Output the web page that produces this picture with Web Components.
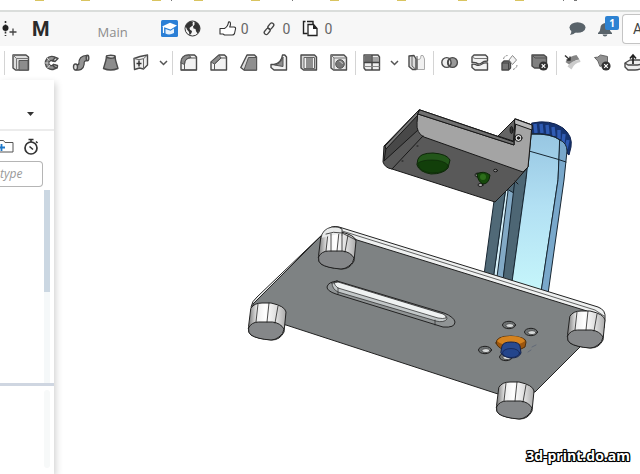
<!DOCTYPE html>
<html lang="en">
<head>
<meta charset="utf-8">
<title>Main – part studio</title>
<style>
html,body{height:100%;margin:0}
body{font-family:"Open Sans","Noto Sans",sans-serif;color:#333;background:#fff;overflow:hidden}
</style>
</head>
<body>
<cad-app></cad-app>
<script>
const define = (name, html, init) => customElements.define(name, class extends HTMLElement {
  constructor() {
    super();
    this.attachShadow({mode: "open"});
    const t = document.createElement("template");
    t.innerHTML = html;
    this.shadowRoot.append(t.content.cloneNode(true));
  }
  connectedCallback() { if (init) init(this, this.shadowRoot); }
});

const D = 'stroke="#4a4a4a" stroke-width="1.4" stroke-linejoin="round"';
const icons = {
  slider: '<path d="M5.500 1v15" stroke="#333" stroke-dasharray="2 1.500" stroke-width="1.600"/><circle cx="5.500" cy="8" r="3" fill="#222"/><path d="M9.500 12h7M13 8.500v7" stroke="#444" stroke-width="1.300"/>',
  edu: '<rect width="17" height="17" rx="1.500" fill="#2b7fd6"/><path d="M1 6.500l8-3.700L16 5.500 9.500 9.500z" fill="#fff"/><path d="M4.500 9v4.500q4 2 8.500-.5V8.500L9.500 10.800z" fill="#e6f1fc"/><path d="M2.500 7v6" stroke="#fff" stroke-width="1.200"/>',
  globe: '<circle cx="8.500" cy="8.500" r="7.500" fill="#f4f4f4" stroke="#333" stroke-width="1"/><path d="M1.500 6L3 3.500 6 1.600l3 .2-.5 2 .5 1.500-2 1.500L5.500 8 6 9.700l2 1.300-.5 2-2 2.500L5 12 3 9.500zM10.500 1.500l3.500 1.800 2 4-.5 3.500-2 2.700-1.500-2.200-.5-2.300-2-.5L9 6.500l1.500-1.800z" fill="#333"/>',
  thumb: '<path d="M1 8.500h4.500C8 7 9.300 5 9.500 2c2-.7 2.700 2 1.200 5H15q2 .3 1.500 2l-1 4.500q-.5 1.500-2.300 1.500H5.500L4 14H1z" fill="#fff" stroke="#333" stroke-width="1.100" stroke-linejoin="round"/>',
  link: '<g fill="none" stroke="#444" stroke-width="1.300"><rect x="-3" y="-2" width="7" height="4" rx="2" transform="translate(9.500 6.500) rotate(-50)"/><rect x="-4" y="-2" width="7" height="4" rx="2" transform="translate(6.500 11) rotate(-50)"/></g>',
  copies: '<path d="M5.500 13.500h-4v-12h2M5 1.500h6v3" fill="none" stroke="#222" stroke-width="1.400"/><path d="M6 4.500h5.500L15 8.500v7H6z" fill="#fff" stroke="#222" stroke-width="1.300"/><path d="M11 4.500v4.500h4.500z" fill="#222"/>',
  comment: '<ellipse cx="9.500" cy="7.500" rx="8" ry="5.300" fill="#59636a"/><path d="M3.500 10Q3.500 13 2 15q4-.5 6-3z" fill="#59636a"/>',
  bell: '<path d="M1 14V13q2.500-2 2.500-5.500Q3.500 4 8 3q4.500 1 4.500 4.500Q12.500 11 15 13v1zM5.500 14.500h5q-.5 2-2.500 2t-2.500-2z" fill="#59636a"/>',
  extrude: `<path d="M1 1h13l2.500 2v13H3.500L1 14z" fill="#ddd" ${D}/><path d="M1 1l3.500 3.500h12M4.500 4.500V16" fill="none" stroke="#777"/><path d="M7 6.500h9V16H7z" fill="#8c8c8c" stroke="#555"/>`,
  revolve: `<path d="M14.500 4.200A6.600 6.600 0 1 0 15.500 12.500L11.500 10.500A2.600 2.600 0 1 1 11.200 7.200z" fill="#929292" ${D}/><path d="M4.500 3.500l3 3M2.500 9h4M5.500 14l2.500-3" stroke="#d0d0d0"/><path d="M10.500 6.500l3-3 2.500 1-3 3zM11.500 10.500l4 1-.5 2.500-3.500-1.500z" fill="#e6e6e6" ${D}/>`,
  sweep: `<path d="M4 13q5 1.500 5.500-3Q9 4 15 4" stroke="#444" stroke-width="6.600" fill="none"/><path d="M4 13q5 1.500 5.500-3Q9 4 15 4" stroke="#949494" stroke-width="4.200" fill="none"/><ellipse cx="3.500" cy="13" rx="2" ry="3" fill="#e0e0e0" ${D}/><ellipse cx="15.500" cy="4" rx="1.300" ry="2.700" fill="#bbb" ${D}/>`,
  loft: `<path d="M4.500 2h8.500l.5 4 2.500 8.500q-7.500 3-14.500 0L4 6z" fill="#8c8c8c" ${D}/><ellipse cx="8.700" cy="2.700" rx="4.200" ry="1.500" fill="#ddd" ${D}/>`,
  cutout: `<path d="M2 4.500L8 2.500 15.500 1v10L11.500 15l-4-1-5 1.500z" fill="#eee" ${D}/><path d="M2 4.500l5 1.200 4.500-1 4-3.700M11.500 4.700V15" fill="none" stroke="#666"/><path d="M7 6.500v6M4.500 9.500h5" stroke="#333" stroke-width="1.500"/>`,
  fillet: `<path d="M1 16V9Q1 1 9 1h5.500l2 2v13z" fill="#f2f2f2" ${D}/><path d="M1 9Q1 1 9 1l2 2.500Q4.500 4 4.500 10.500z" fill="#8c8c8c" stroke="#555"/><path d="M4.500 16v-6Q5 4 10.500 4h6M1 16h15.500" fill="none" stroke="#555"/>`,
  chamfer: `<path d="M1 16V8l8-7h5.500l2 2v13z" fill="#f2f2f2" ${D}/><path d="M1 8l8-7 2 3-6.500 6z" fill="#8c8c8c" stroke="#555"/><path d="M4.500 16v-6L11 4h5.500" fill="none" stroke="#555"/>`,
  draft: `<path d="M7 1h7.500l2 2v13H4L.8 13.500z" fill="#ddd" ${D}/><path d="M8.500 3.500h8V16H4z" fill="#8f8f8f" stroke="#555"/>`,
  rib: `<path d="M12.500 1h2.300l1.700 2v13H4l-3-2.500v-3h3Q11.500 9 12.500 1z" fill="#f2f2f2" ${D}/><path d="M13 3v9.500L4.500 11Q11 10 13 3z" fill="#8c8c8c" stroke="#555"/>`,
  shell: `<path d="M1 1h13.500l2 2v13H3.500L1 14z" fill="#d6d6d6" ${D}/><path d="M4 3.500h10.500v11H4z" fill="#f3f3f3" stroke="#666"/><path d="M6 4h7v10H6z" fill="#8f8f8f"/>`,
  hole: `<path d="M1 1h13l2.500 2.500V16H3.500L1 14z" fill="#e6e6e6" ${D}/><path d="M1 1l3 3h12.500M4 4v12" fill="none" stroke="#777"/><circle cx="10" cy="10" r="4.300" fill="#777" stroke="#555"/><path d="M9.500 7.500q2.500 0 3 2.500" stroke="#ccc" fill="none"/>`,
  pattern: `<path d="M1 1h14l1.500 2v13H2.500L1 14z" fill="#eee" ${D}/><path d="M1.500 1.500h7V8h-7z" fill="#707070"/><path d="M9.500 3h6.500v5H9.500z" fill="#a5a5a5"/><path d="M9 1v15M1 8.500h15.500" stroke="#444" stroke-width="1.400"/><path d="M1 12.500h15.500" stroke="#888"/>`,
  mirror: `<path d="M1 2l5-.5L8 5v10.500H4.500L1 12.500z" fill="#ddd" ${D}/><path d="M4 2v10l3.500 3" stroke="#666" fill="none"/><path d="M9.500 5q3 2 3.500-3.500h2L16.500 5v10.500H9.500z" fill="#f0f0f0" stroke="#aaa"/><path d="M9 2v14" stroke="#555"/>`,
  bool: `<circle cx="5.700" cy="8.500" r="4.900" fill="#eee" ${D}/><circle cx="11.500" cy="8.500" r="4.900" fill="#999" ${D}/><path d="M8.600 4.600q3 4 0 7.800-3-4 0-7.800z" fill="#e8e8e8" ${D}/>`,
  split: `<path d="M1 3l2-2h11.500l2 2v4q-4 0-6 2-3 2-5 0-2-1-4.500-.5z" fill="#f2f2f2" ${D}/><path d="M1 10.500q2-1 4.500.5 3 1 5.500-1 2-1.500 5.500-1V16H4l-3-2.500z" fill="#f2f2f2" ${D}/><path d="M1 3l3 1.500h12" fill="none" stroke="#777"/>`,
  transform: `<path d="M1 9l2-2h6.500v7l-2 2H1z" fill="#777" ${D}/><path d="M7.500 9l2-2M7.500 9H1M7.500 9v7" stroke="#444"/><path d="M11.500 1.500l4 4.500-4 4.500L8 6z" fill="#f3f3f3" stroke="#888"/><path d="M2.500 5q1-3.500 4-3.500M16 11q0 3-4 4.500" stroke="#888" stroke-dasharray="3 1" fill="none"/>`,
  del: `<path d="M1 1h12l2.500 2v11H3.500L1 12z" fill="#808080" ${D}/><path d="M1 1l3 3h11" fill="none" stroke="#555"/><circle cx="12.500" cy="12" r="4.600" fill="#333"/><path d="M10.700 10.200l3.600 3.600M14.300 10.200l-3.600 3.600" stroke="#fff" stroke-width="1.200"/>`,
  moveface: `<path d="M1.500 8Q6 1.500 12.500 1l3 4.500q-6 .5-9 6z" fill="#858585"/><path d="M3.500 12.500Q8 5.500 16 6l.5 2q-6 .5-9 7.500z" fill="#ccc"/><path d="M1 1.500l5 4.500M6 2.500V6H2.500" stroke="#333" fill="none" stroke-width="1.400"/>`,
  delface: `<path d="M.500 3.500Q4 4 6.500 1l7 1.500v6L6 12.500Q4.500 6 .5 3.500z" fill="#929292" stroke="#666"/><circle cx="12" cy="12" r="4.600" fill="#333"/><path d="M10.200 10.200l3.600 3.600M13.800 10.200l-3.600 3.600" stroke="#fff" stroke-width="1.200"/>`,
  lift: `<path d="M1 9l5-3h10l4 3v3q-3 4-9 4H4l-3-3z" fill="#eee" ${D}/><path d="M1 9l3 2h7q5 0 9-2" fill="none" ${D}/><path d="M9 10V2M6 4.500L9 1l3 3.500" stroke="#222" stroke-width="1.700" fill="none"/>`,
  folder: '<path d="M0 2.500h3.500L5 4.500h8V14H0" fill="#fff" stroke="#555"/><path d="M0 9.500h5M1.500 6v7" stroke="#1f78c8" stroke-width="1.800"/>',
  watch: '<circle cx="8" cy="10" r="6" fill="#fff" stroke="#333" stroke-width="1.700"/><path d="M5.500 1.500h5M8 2v2M13 3.500l1.500 1.500M6.500 8.500l3.500 3" stroke="#333" stroke-width="1.600"/>'
};

define("cad-icon", `<style>:host{display:block;width:18px;height:18px;flex:none}svg{display:block;width:100%;height:100%;overflow:visible}</style><svg viewBox="0 0 18 18" fill="none" aria-hidden="true"></svg>`,
  (el, root) => root.querySelector("svg").innerHTML = icons[el.getAttribute("name")]);

define("tool-button", `<style>:host{display:block;flex:none}button{display:grid;place-items:center;width:30px;height:32px;border:0;padding:0;background:none}</style><button></button>`,
  (el, root) => {
    const n = el.getAttribute("name");
    const icon = document.createElement("cad-icon");
    icon.setAttribute("name", n);
    root.querySelector("button").setAttribute("aria-label", n);
    root.querySelector("button").replaceChildren(icon);
  });

define("menu-arrow", `<style>:host{display:block;flex:none}button{display:grid;place-items:center;width:15px;height:32px;border:0;padding:0;background:none}</style><button aria-label="More"><svg width="9" height="6" viewBox="0 0 9 6" fill="none"><path d="M1 1l3.500 3.500L8 1" stroke="#555" stroke-width="1.500"/></svg></button>`);

define("tool-bar", `<style>
:host{display:flex;align-items:center;height:33px;padding:0 0 1px 3px;background:#fff;overflow:hidden}
i{flex:none;width:1px;height:24px;margin:0 1px;background:#d4d4d4}
</style>` + [
  "extrude revolve sweep loft cutout >", "fillet chamfer draft rib shell hole", "pattern > mirror", "bool split transform del", "moveface delface lift"
].map(g => "<i></i>" + g.split(" ").map(n => n === ">" ? "<menu-arrow></menu-arrow>" : `<tool-button name="${n}"></tool-button>`).join("")).join(""));

define("stat-button", `<style>:host{display:block}button{display:flex;align-items:center;gap:4px;border:0;padding:0;background:none;font:14px Roboto,sans-serif;color:#666}</style><button><slot name="icon"></slot><slot></slot></button>`);

define("doc-header", `<style>
:host{display:flex;align-items:center;height:34px;background:#f7f7f7;overflow:hidden}
h1{margin:0 0 0 14px;font:bold 20px/34px Roboto,sans-serif;color:#2b2b2b}
.branch{margin:5px 0 0 48px;font-size:13px;color:#8c8c8c}
.marks{display:flex;gap:5px;margin-left:33px}
.stats{display:flex;gap:12px;margin-left:17px}
.right{display:flex;align-items:center;gap:11px;margin-left:auto}
.bell{position:relative}
.badge{position:absolute;left:8px;top:-4px;width:14px;height:14px;border-radius:2px;background:#2d82d2;color:#fff;font:bold 10px/14px "Open Sans",sans-serif;text-align:center}
.app{box-sizing:border-box;width:18px;height:30px;margin-left:-4px;padding:0 0 0 10px;border:1px solid #c4c4c4;border-right:0;border-radius:4px 0 0 4px;background:#fff;font:14px Roboto,sans-serif;color:#444;text-align:left;overflow:hidden}
</style>
<cad-icon name="slider"></cad-icon><h1>M</h1><span class="branch">Main</span>
<div class="marks"><cad-icon name="edu"></cad-icon><cad-icon name="globe"></cad-icon></div>
<div class="stats"><stat-button><cad-icon slot="icon" name="thumb"></cad-icon>0</stat-button><stat-button><cad-icon slot="icon" name="link"></cad-icon>0</stat-button><stat-button><cad-icon slot="icon" name="copies"></cad-icon>0</stat-button></div>
<div class="right"><cad-icon name="comment"></cad-icon><div class="bell"><cad-icon name="bell"></cad-icon><span class="badge">1</span></div><button class="app">A</button></div>`);

define("bookmark-strip", `<style>:host{display:block;height:10px;border-bottom:2px solid #dadddb;background:#fff;overflow:hidden}svg{display:block}</style>
<svg width="640" height="10" aria-hidden="true"><path d="M35 0h9M81 0h9M152 0h9M194 0h9M251 0h9M330 0h9M397 0h9M458 0h9M515 0h9" stroke="#d9c460" stroke-width="2"/><path d="M171 0h1M292 0h1M563 0h1M574 0h3" stroke="#777" stroke-width="2"/></svg>`);

define("feature-panel", `<style>
:host{display:grid;grid-template-rows:51px 1fr 3px 88px;position:relative;z-index:1;background:#fff;box-shadow:2px 3px 7px rgba(0,0,0,.18)}
.top{display:flex;align-items:flex-end;justify-content:flex-end;padding:0 19px 9px 0;border-bottom:2px solid #ececec}
.top button,.tools button{border:0;padding:0;background:none;display:block}
.tools{display:flex;justify-content:space-between;padding:7px 13px 5px 0}
.list{display:flex;flex-direction:column;min-height:0}
input{box-sizing:border-box;width:43px;height:26px;margin:0;padding:0 0 1px;border:1px solid #b5b5b5;border-left:0;border-radius:0 4px 4px 0;background:#fff;font:italic 12px "Open Sans",sans-serif}
input::placeholder{color:#999;opacity:1}
.track{flex:1;width:6px;margin:3px 4px 0 auto;background:#f5f8f9}
.thumb{height:53%;background:#cbd7e2}
.bar{background:#cfd6e1}
.low{width:6px;margin:4px 4px 6px auto;border-radius:3px;background:#f7f9f9}
</style>
<div class="top"><button aria-label="Panel menu"><svg width="8" height="5" viewBox="0 0 8 5"><path d="M0 0h7L3.500 4z" fill="#333"/></svg></button></div>
<div class="list"><div class="tools"><button aria-label="Add folder"><cad-icon name="folder"></cad-icon></button><button aria-label="History"><cad-icon name="watch"></cad-icon></button></div>
<input aria-label="Filter by name or type" placeholder="type"><div class="track"><div class="thumb"></div></div></div>
<div class="bar"></div><div class="low"></div>`);

define("model-view", `<style>:host{display:block;min-width:0;min-height:0}svg{display:block;width:100%;height:100%}</style>
<svg viewBox="54 80 586 394" preserveAspectRatio="xMinYMin meet" role="img" aria-label="Stand model" stroke-linejoin="round" stroke-linecap="round">
<defs>
<linearGradient id="col" x1="0" y1="0" x2="0" y2="1"><stop stop-color="#97c6e2"/><stop offset=".45" stop-color="#b2e0f3"/><stop offset="1" stop-color="#c6f6fb"/></linearGradient>
<linearGradient id="ft"><stop stop-color="#777"/><stop offset=".24" stop-color="#eee"/><stop offset=".45" stop-color="#fff"/><stop offset=".75" stop-color="#ddd"/><stop offset="1" stop-color="#aaa"/></linearGradient>
<g id="foot" stroke="#222" stroke-width="1"><path d="M3 5Q6 0 14 0h9q14 3 15 9l-2 20q-4 8-12 8-14-1-21-5-3-2-2.500-8z" fill="url(#ft)"/><path d="M.5 25q3-6 10-6h14q8 1 11.500 7-.5 5-5 8-4 3-8 3-14-1-20-5-3-2-2.500-7z" fill="#858789"/><path d="M10 1L8 19M21 0l-2 19M30 3l-3 17" stroke-width=".8"/></g>
<g id="hole"><ellipse rx="6.500" ry="3.700" fill="#6d7172" stroke="#222"/><ellipse cx="1" cy=".6" rx="4" ry="2" fill="#d7dada" stroke="#333" stroke-width=".7"/></g>
</defs>
<g stroke="#182733" stroke-width="1">
<path d="M532 123q18-4 31 5 10 8 8 19l-2 8-7-6-30-14z" fill="#16336f" stroke="#10234f"/>
<path d="M535 124l1 9M541 124l1 9M547 125l1 9M553 127l1 9M559 130v9M564 134l-1 9M568 140l-2 9" stroke="#2f5bb3" stroke-width="3.400" stroke-linecap="butt"/>
<path d="M494 201L484 275l19 5 12-98z" fill="#506977"/>
<path d="M506 189L494 277l9 3L515 194z" fill="#82a9c5"/><path d="M506 190l2 1-11 86-3-1z" fill="#d4eff8"/>
<path d="M527 167l-12 12-12 101 9 3 14-103z" fill="#4d6674"/>
<path d="M531 134q20-1 29 6L558 180 541 293l-29-11 14-102z" fill="url(#col)"/>
<path d="M560 140q7 3 7 11l-3 29-16 114-7-2 17-112z" fill="#79a8cb"/>
<path d="M531 134q20-1 29 6M529 151l28 8 9 3" fill="none"/>
</g>
<g stroke="#181818" stroke-width="1">
<path d="M419 110L384 146l-1 16q2 6 9 7l103 33 20-20 13-15 4-42-17-6-17 17z" fill="#595959"/>
<path d="M417 114L386 148l-2 13 34-31z" fill="#484848"/>
<path d="M419 110L385 146l1 3 32-34z" fill="#777"/>
<path d="M418 114l96 31 2-26 16 6-4 42-5 5-99-35q-8-4-7-14z" fill="#a4a4a4"/>
<path d="M420 110l94 32v3l-96-31z" fill="#707070"/>
<path d="M515 119l-17 17 15 5z" fill="#656565"/><path d="M515 119l17 6v5l-17-6z" fill="#bbb"/>
<ellipse cx="511.500" cy="130" rx="1.500" ry="3.500" fill="#333"/>
<path d="M423 136l-31 33M417 146h1M402 161h1M515 181l3 3" fill="none"/>
<circle cx="518.500" cy="138" r="3.500" fill="#ddd"/><circle cx="518.500" cy="138" r="1.200" fill="#222"/>
<path d="M418 159q2-6 15-6 14 1 17 7l-2 8q-5 6-17 6-12-2-14-9z" fill="#23561a" stroke="#0d2608"/><path d="M418 163q4-3 14-3 11 0 16 5-1 8-16 8-12-1-14-8z" fill="#123f0a" stroke="#0d2608" stroke-width=".7"/>
<ellipse cx="478" cy="175" rx="3" ry="2" fill="#999"/><ellipse cx="480.500" cy="185" rx="2.500" ry="1.500" fill="#aaa"/><ellipse cx="495.500" cy="170.500" rx="2" ry="1.300" fill="#888"/>
<path d="M477 174q6-4 13 1-1 9-7 9-5-2-6-10z" fill="#164a0b" stroke="#0b2506"/><circle cx="483" cy="177" r="3" fill="#2d6e1b" stroke="none"/>
</g>
<g stroke="#222" stroke-width="1">
<path d="M251 307q1-6 6-10l69-66q5-6 13-4l259 80q8 3 7 11l-1 10-20 18L350 250l-90 60z" fill="#eef0f0"/>
<path d="M326 231L253 304l-2 15 35 6 212 69 37-2 45-45 7-36L357 240l-16-8z" fill="#7e8283"/>
<path d="M341 228v4M339 230l256 80 9 6" fill="none" stroke-width=".7"/>
<path d="M337 281l107 32q10 4 11 9 0 6-12 5L336 294q-9-3-9-7 1-5 10-6z" fill="#909495"/>
<path d="M332 283q3-2 8 0l103 31q5 3 4 5-3 4-11 2L338 292q-6-3-6-9z" fill="#c3c8c9" stroke-width=".7"/>
<path d="M334 283l4-1 105 32q4 2 3 4-3 1-8 0L338 288q-3-2-4-5z" fill="#eff2f2" stroke-width=".7"/><path d="M338 288v6M435 320v5" stroke-width=".7"/>
</g>
<use href="#foot" x="318" y="232"/><path d="M321 238q1-10 11-11l10 2v4l-21 5z" fill="#e8eaea" stroke="none"/><path d="M321 238q1-9 11-11 7-1 10 2v6M326 234q7-3 16-1l14 7M342 235v16M331 234v17" fill="none" stroke="#222" stroke-width=".8"/>
<use href="#foot" x="248" y="303"/><use href="#foot" x="567" y="311"/><use href="#foot" x="496" y="382"/>
<use href="#hole" x="509" y="325"/><use href="#hole" x="531" y="332"/><use href="#hole" x="485" y="350"/><use href="#hole" x="506" y="357"/>
<path d="M496 343q0-7 15-7 15 1 15 6l-1 5q-5 4-14 4-13-1-15-8z" fill="#9c560e" stroke="#50300c"/><path d="M497 341q3-5 14-5t14 5q-5 4-14 4-10 0-14-4z" fill="#d5831f"/>
<path d="M502 346q1-4 9-4t9 4l1 7q-2 5-10 5-8-1-10-5z" fill="#294a8f" stroke="#14234b"/><ellipse cx="511" cy="353" rx="8.500" ry="4.500" fill="#23458c" stroke="#14234b" stroke-width=".7"/>
<path d="M528 352l3-2M532 347l4-2" stroke="#626a78"/>
</svg>`);

define("water-mark", `<style>:host{display:block;position:absolute;z-index:2;right:10px;bottom:9px;font:bold 14px/18px "Open Sans",sans-serif;color:#fff;text-shadow:-1px -1px #000,0 -1px #000,1px -1px #000,-1px 0 #000,1px 0 #000,-1px 1px #000,0 1px #000,1px 1px #000,0 0 2px #000}</style><slot></slot>`);

define("cad-app", `<style>
:host{display:grid;grid-template-rows:auto auto auto 1fr;grid-template-columns:minmax(0,1fr);height:100vh;position:relative;overflow:hidden}
main{display:grid;grid-template-columns:54px minmax(0,1fr);min-height:0}
</style><bookmark-strip></bookmark-strip><doc-header></doc-header><tool-bar></tool-bar><main><feature-panel></feature-panel><model-view></model-view></main><water-mark>3d-print.do.am</water-mark>`);
</script>
</body>
</html>
